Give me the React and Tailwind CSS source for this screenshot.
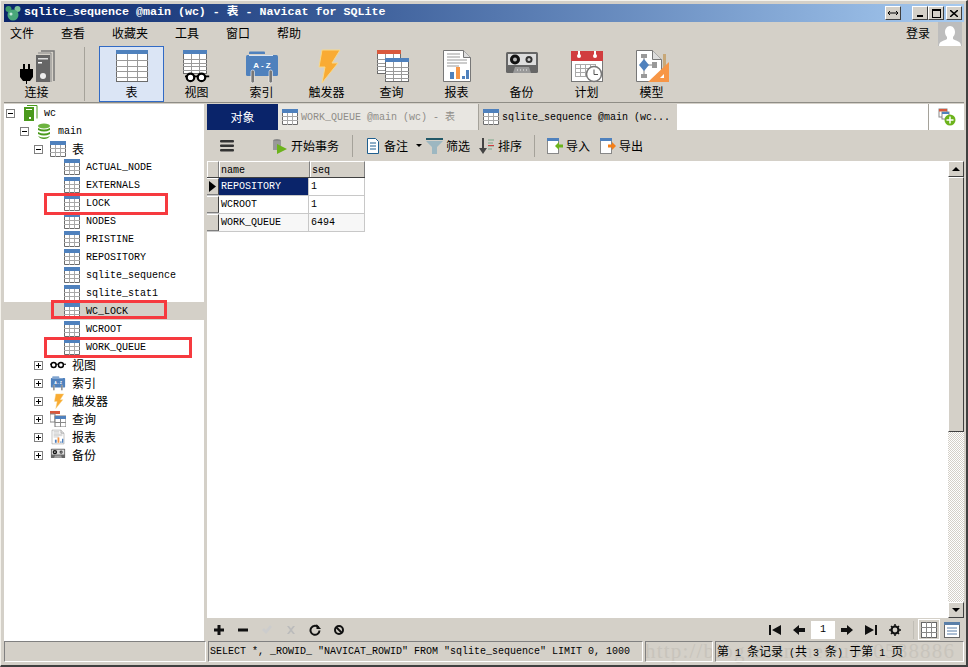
import React from "react";

const MONO = "font-['Liberation_Mono','Noto_Sans_CJK_SC',monospace]";
const CJK = "font-['Noto_Sans_CJK_SC','Liberation_Sans',sans-serif]";

const TableIcon = ({ s = 16, className = "" }) => (
  <svg width={s} height={s} viewBox="0 0 16 16" className={className}>
    <rect x="0" y="0" width="16" height="16" fill="#fff" />
    <rect x="0" y="0" width="16" height="4" fill="#4f81bd" />
    <path d="M.5 4v11.5h15V4" fill="none" stroke="#6b6b6b" />
    <path d="M0 7.5h16M0 11.5h16M5.5 4v12M10.5 4v12" stroke="#a8a8a8" />
  </svg>
);

const BigTable = ({ x = 0, y = 0, w = 32, h = 32, head = "#4f81bd" }) => {
  const rows = [];
  for (let i = 1; i < 5; i++) rows.push(y + 5 + (i * (h - 5)) / 5);
  return (
    <g>
      <rect x={x + 0.5} y={y + 0.5} width={w - 1} height={h - 1} fill="#fff" stroke="#6b6b6b" />
      <rect x={x} y={y} width={w} height={4} fill={head} />
      {rows.map((r) => (
        <path key={r} d={`M${x} ${Math.round(r) + 0.5}h${w}`} stroke="#9a9a9a" />
      ))}
      <path d={`M${x + Math.round(w * 0.34) + 0.5} ${y + 4}v${h - 5}M${x + Math.round(w * 0.66) + 0.5} ${y + 4}v${h - 5}`} stroke="#9a9a9a" />
    </g>
  );
};

const Connect = () => (
  <svg width="36" height="36" viewBox="0 0 36 36">
    <path d="M22 3h13v30" fill="none" stroke="#777" strokeWidth="1.5" />
    <path d="M19 5h13v29" fill="none" stroke="#888" strokeWidth="1" />
    <rect x="17" y="7" width="14" height="27" fill="#666" />
    <rect x="19" y="10" width="10" height="1.5" fill="#ddd" />
    <rect x="19" y="14" width="4" height="1.5" fill="#fff" />
    <circle cx="24" cy="28" r="3" fill="#eee" />
    <path d="M5 16v6M10 16v6" stroke="#000" strokeWidth="2" />
    <path d="M1 21h13v8l-3 4H8v4H7v-4H4l-3-4z" fill="#000" />
  </svg>
);

const Glasses = ({ s = 1 }) => (
  <g transform={`scale(${s})`}>
    <circle cx="5" cy="4" r="3.4" fill="#fff" stroke="#000" strokeWidth="2" />
    <circle cx="15" cy="4" r="3.4" fill="#fff" stroke="#000" strokeWidth="2" />
    <path d="M8 3h4M0 3h2M18 3h4" stroke="#000" strokeWidth="1.5" />
  </g>
);

const ViewIcon = () => (
  <svg width="36" height="36" viewBox="0 0 36 36">
    <BigTable x={4} y={2} w={24} h={24} />
    <g transform="translate(6 25)"><Glasses s={1.1} /></g>
  </svg>
);

const IndexIcon = ({ s = 36 }) => (
  <svg width={s} height={s} viewBox="0 0 36 36">
    <path d="M5 6V4.500q0-1 1-1h14q1 0 1 1V6z" fill="#4f81bd" />
    <rect x="2" y="7" width="32" height="21" rx="1.500" fill="#4f81bd" />
    <path d="M5 7.500h24" stroke="#fff" strokeWidth="0.800" />
    <text x="18" y="20" fontSize="8" fontWeight="700" fill="#fff" textAnchor="middle" fontFamily="Liberation Sans">A - Z</text>
    <rect x="7" y="22" width="3.500" height="13" rx="1.700" fill="#777" stroke="#fff" strokeWidth="0.600" />
    <rect x="25" y="22" width="3.500" height="13" rx="1.700" fill="#777" stroke="#fff" strokeWidth="0.600" />
  </svg>
);

const Bolt = ({ s = 36 }) => (
  <svg width={s} height={s} viewBox="0 0 36 36">
    <path d="M13 2h18l-8 13h6L13 35l3-16h-6z" fill="#f9ab33" stroke="#f7d98c" strokeWidth="1" />
  </svg>
);

const QueryIcon = () => (
  <svg width="36" height="36" viewBox="0 0 36 36">
    <BigTable x={3} y={2} w={24} h={24} head="#d9593d" />
    <BigTable x={11} y={10} w={24} h={24} />
  </svg>
);

const ReportIcon = ({ s = 36 }) => (
  <svg width={s} height={s} viewBox="0 0 36 36">
    <path d="M4.500 2.500h20l7 7v24h-27z" fill="#fff" stroke="#777" />
    <path d="M24.500 2.500v7h7" fill="#ddd" stroke="#777" />
    <path d="M8 6h13M8 9h13M8 12h20M8 15h20M8 18h12" stroke="#999" />
    <rect x="11" y="24" width="4" height="7" fill="#4f81bd" />
    <rect x="17" y="19" width="4" height="12" fill="#f79646" />
    <rect x="23" y="28" width="3" height="3" fill="#4f81bd" />
    <rect x="27" y="22" width="3" height="9" fill="#4f81bd" />
  </svg>
);

const BackupIcon = ({ s = 36 }) => (
  <svg width={s} height={s} viewBox="0 0 36 36">
    <rect x="2" y="4" width="32" height="21" rx="1.500" fill="#666" />
    <rect x="4" y="6" width="28" height="11" fill="#ddd" />
    <circle cx="11" cy="11.500" r="5" fill="#111" />
    <circle cx="11" cy="11.500" r="2" fill="#bbb" />
    <circle cx="25" cy="11.500" r="3.500" fill="#333" />
    <circle cx="25" cy="11.500" r="1.500" fill="#ccc" />
    <path d="M9 25l2-6h14l2 6z" fill="#999" />
    <path d="M13 22h10" stroke="#eee" strokeDasharray="1 2" />
  </svg>
);

const ScheduleIcon = () => (
  <svg width="36" height="36" viewBox="0 0 36 36">
    <rect x="2.500" y="3.500" width="31" height="30" fill="#fff" stroke="#777" />
    <rect x="2" y="3" width="32" height="10" fill="#d13d3f" />
    <path d="M10 3v5M26 3v5" stroke="#fff" strokeWidth="2" />
    <circle cx="10" cy="8" r="2" fill="#fff" />
    <circle cx="26" cy="8" r="2" fill="#fff" />
    <path d="M6 16.500h20M6 20.500h20M6 24.500h18M6 28.500h14M6.500 16v13M11.500 16v13M16.500 16v13M21.500 16v9M26.500 16v5" stroke="#aaa" />
    <circle cx="25" cy="26" r="7.500" fill="#fff" stroke="#777" strokeWidth="1.500" />
    <path d="M25 21.500V26.500h4" fill="none" stroke="#555" />
  </svg>
);

const ModelIcon = () => (
  <svg width="36" height="36" viewBox="0 0 36 36">
    <path d="M2.500 2.500h16l9 9v22h-25z" fill="#fff" stroke="#777" />
    <path d="M18.500 2.500v9h9" fill="#ddd" stroke="#777" />
    <rect x="7" y="6" width="6" height="4" fill="#999" />
    <rect x="7" y="26" width="6" height="4" fill="#999" />
    <rect x="18" y="14" width="5" height="6" fill="#999" />
    <path d="M10 10v16M10 17h8" stroke="#888" />
    <path d="M10 11l5 6-5 6-5-6z" fill="#4f81bd" />
    <rect x="29" y="6" width="3" height="20" fill="#c8a878" />
    <path d="M35 14v20H14z" fill="#f79646" />
    <path d="M30 26v4h-4z" fill="#fff" />
  </svg>
);

const Mickey = () => (
  <svg width="16" height="16" viewBox="0 0 16 16">
    <circle cx="3.500" cy="4" r="3" fill="#3d9a6a" />
    <circle cx="12.500" cy="4" r="3" fill="#7cc29a" />
    <circle cx="8" cy="10" r="5.500" fill="#4aa87a" />
    <circle cx="6" cy="9" r="1.500" fill="#c7eadb" />
  </svg>
);

const Expander = ({ open }) => (
  <span className="w-[9px] h-[9px] border border-[#808080] bg-white relative inline-block shrink-0">
    <span className="absolute left-[1px] top-[3px] w-[5px] h-[1px] bg-black" />
    {!open && <span className="absolute left-[3px] top-[1px] w-[1px] h-[5px] bg-black" />}
  </span>
);

const Win = ({ children, className = "" }) => (
  <div className={`flex items-center justify-center bg-[#d4d0c8] border border-t-white border-l-white border-r-[#404040] border-b-[#404040] ${className}`}>
    {children}
  </div>
);

const ToolBtn = ({ icon, label, active }) => (
  <div className={`w-[65px] h-[56px] flex flex-col items-center box-border ${active ? "border border-[#316ac5] bg-[#dbe5f5]" : ""}`}>
    <div className={`h-[36px] flex items-center justify-center ${active ? "mt-[1px]" : "mt-[2px]"}`}>{icon}</div>
    <span className={`text-[12px] leading-[16px] text-black ${CJK}`}>{label}</span>
  </div>
);

const TreeRow = ({ pad, expander, icon, label, cjk, selected }) => (
  <div className={`h-[18px] flex items-center ${selected ? "bg-[#d4d0c8]" : ""}`} style={{ paddingLeft: pad }}>
    {expander !== undefined && (
      <span className="mr-[7px] flex"><Expander open={expander} /></span>
    )}
    <span className="flex w-[16px] h-[16px] shrink-0">{icon}</span>
    <span className={`ml-[6px] whitespace-pre text-black ${cjk ? `text-[12px] ${CJK}` : `text-[10px] ${MONO}`}`}>{label}</span>
  </div>
);

const TABLES = ["ACTUAL_NODE", "EXTERNALS", "LOCK", "NODES", "PRISTINE", "REPOSITORY", "sqlite_sequence", "sqlite_stat1", "WC_LOCK", "WCROOT", "WORK_QUEUE"];

const RedBox = ({ className }) => (
  <div className={`absolute border-[3px] border-[#f63a3f] pointer-events-none ${className}`} />
);

const Small = ({ children, w = 16 }) => (
  <svg width={w} height="16" viewBox={`0 0 ${w} 16`} className="shrink-0">{children}</svg>
);

const Tb2 = ({ icon, label, className = "" }) => (
  <div className={`flex items-center gap-[3px] ${className}`}>
    {icon}
    <span className={`text-[12px] text-black ${CJK}`}>{label}</span>
  </div>
);

const Sep2 = () => <div className="w-[1px] h-[22px] bg-[#a5a29a]" />;

const rowsData = [
  ["REPOSITORY", "1"],
  ["WCROOT", "1"],
  ["WORK_QUEUE", "6494"],
];

const G = ({ children }) => (
  <svg width="12" height="12" viewBox="0 0 12 12">{children}</svg>
);

const M = ({ children }) => <span className={`text-[10px] ${MONO}`}>{children}</span>;

function Header({ children, className = "" }) {
  return (
    <div className={`shrink-0 bg-[#d4d0c8] border-r border-r-[#808080] border-t border-t-white border-l border-l-white pl-[1px] pt-[1px] flex items-center text-[10px] text-black font-['Liberation_Mono',monospace] ${className}`}>
      {children}
    </div>
  );
}

export default function App() {
  return (
    <div className="w-[968px] h-[667px] bg-[#d4d0c8] box-border pt-[4px] pl-[3px] pr-[2px] pb-[3px] border-b-[2px] border-r-[2px] border-b-[#404040] border-r-[#404040] border-t border-l border-t-[#f4f2ec] border-l-[#f4f2ec] relative overflow-hidden flex flex-col">
      {/* Watermark */}
      <div className="absolute left-[644px] top-[635px] text-[21px] leading-[30px] tracking-[1.2px] text-[#c8c4bc] whitespace-pre font-['Liberation_Serif',serif] pointer-events-none">http://blog.csdn.net/u010588886</div>

      {/* Title */}
      <div className="h-[18px] shrink-0 flex items-center bg-gradient-to-r from-[#0a246a] to-[#a6caf0] pl-[1px] pr-[2px] -mt-[1px]">
        <Mickey />
        <span className={`ml-[3px] text-[11.67px] font-bold text-white whitespace-pre ${MONO}`}>sqlite_sequence @main (wc) - 表 - Navicat for SQLite</span>
        <div className="flex-1" />
        <Win className="w-[16px] h-[14px] mr-[11px] text-[10px] leading-none">
          <svg width="10" height="6" viewBox="0 0 10 6"><path d="M0 3h10M2 1L0 3l2 2M8 1l2 2-2 2" fill="none" stroke="#000" /></svg>
        </Win>
        <Win className="w-[16px] h-[14px]"><span className="w-[6px] h-[2px] bg-black mt-[6px]" /></Win>
        <Win className="w-[16px] h-[14px]"><span className="w-[9px] h-[9px] border border-black border-t-2" /></Win>
        <Win className="w-[16px] h-[14px] ml-[2px]">
          <svg width="8" height="7" viewBox="0 0 8 7"><path d="M0 0l8 7M8 0L0 7" stroke="#000" strokeWidth="1.500" /></svg>
        </Win>
      </div>

      {/* Menu */}
      <div className={`h-[24px] shrink-0 flex items-center text-[12px] text-black pr-[2px] ${CJK}`}>
        <div className="flex pl-[6px] -mt-[2px]">
          <span className="w-[51px]">文件</span>
          <span className="w-[51px]">查看</span>
          <span className="w-[63px]">收藏夹</span>
          <span className="w-[51px]">工具</span>
          <span className="w-[51px]">窗口</span>
          <span>帮助</span>
        </div>
        <div className="flex-1" />
        <span className="mr-[8px] -mt-[2px]">登录</span>
        <div className="w-[24px] h-[24px] bg-[#bdbdbd] flex items-end justify-center overflow-hidden">
          <svg width="22" height="24" viewBox="0 0 22 24"><path d="M11 4c3 0 5 3 5 6 0 2-1 4-2 5v2c3 2 8 2 8 7H0c0-5 5-5 8-7v-2c-1-1-2-3-2-5 0-3 2-6 5-6z" fill="#fff" /></svg>
        </div>
      </div>

      {/* Toolbar */}
      <div className="h-[57px] shrink-0 flex items-start border-b border-b-[#8f8d86]">
        <ToolBtn icon={<Connect />} label="连接" />
        <div className="w-[1px] h-[54px] bg-[#a5a29a] ml-[15px] mr-[14px] mt-[1px]" />
        <ToolBtn active icon={<svg width="34" height="36" viewBox="0 0 34 36"><BigTable x={1} y={2} w={32} h={32} /></svg>} label="表" />
        <ToolBtn icon={<ViewIcon />} label="视图" />
        <ToolBtn icon={<IndexIcon />} label="索引" />
        <ToolBtn icon={<Bolt />} label="触发器" />
        <ToolBtn icon={<QueryIcon />} label="查询" />
        <ToolBtn icon={<ReportIcon />} label="报表" />
        <ToolBtn icon={<BackupIcon />} label="备份" />
        <ToolBtn icon={<ScheduleIcon />} label="计划" />
        <ToolBtn icon={<ModelIcon />} label="模型" />
      </div>

      {/* Main */}
      <div className="flex-1 min-h-0 flex gap-[3px] pt-[1px]">
        {/* Tree */}
        <div className="w-[200px] shrink-0 bg-white relative">
          <TreeRow pad={2} expander={true} icon={<svg width="16" height="16" viewBox="0 0 16 16"><path d="M5 0.500h10v13" fill="none" stroke="#4a9a1c" /><rect x="2" y="2" width="10" height="14" fill="#4a9a1c" /><rect x="4" y="4" width="6" height="1" fill="#fff" /><rect x="7" y="12" width="2" height="2" fill="#fff" /></svg>} label="wc" />
          <TreeRow pad={16} expander={true} icon={<svg width="16" height="16" viewBox="0 0 16 16"><ellipse cx="8" cy="3" rx="6" ry="2.500" fill="#6cb33f" /><path d="M2 5q6 3 12 0v2q-6 3-12 0zM2 9q6 3 12 0v2q-6 3-12 0zM2 13q6 3 12 0q-2 3-6 3t-6-3z" fill="#4a9a1c" /></svg>} label="main" />
          <TreeRow pad={30} expander={true} icon={<TableIcon />} label="表" cjk />
          {TABLES.map((t) => (
            <TreeRow key={t} pad={60} icon={<TableIcon />} label={t} selected={t === "WC_LOCK"} />
          ))}
          <TreeRow pad={30} expander={false} icon={<svg width="16" height="16" viewBox="0 0 22 16"><g transform="translate(0 4)"><Glasses /></g></svg>} label="视图" cjk />
          <TreeRow pad={30} expander={false} icon={<IndexIcon s={16} />} label="索引" cjk />
          <TreeRow pad={30} expander={false} icon={<Bolt s={16} />} label="触发器" cjk />
          <TreeRow pad={30} expander={false} icon={<svg width="16" height="16" viewBox="0 0 16 16"><rect width="10" height="3" fill="#d9593d" /><rect y="3" width="5" height="8" fill="#fff" stroke="#888" /><rect x="5" y="5" width="11" height="11" fill="#fff" stroke="#777" /><rect x="5" y="5" width="11" height="3" fill="#4f81bd" /><path d="M5 11.500h11M10.500 8v8" stroke="#888" /></svg>} label="查询" cjk />
          <TreeRow pad={30} expander={false} icon={<ReportIcon s={16} />} label="报表" cjk />
          <TreeRow pad={30} expander={false} icon={<BackupIcon s={16} />} label="备份" cjk />
          <RedBox className="left-[40px] top-[89px] w-[124px] h-[22px]" />
          <RedBox className="left-[47px] top-[196px] w-[116px] h-[19px]" />
          <RedBox className="left-[40px] top-[233px] w-[148px] h-[21px]" />
        </div>

        {/* Right */}
        <div className="flex-1 min-w-0 flex flex-col">
          {/* Tabs */}
          <div className="h-[26px] shrink-0 flex">
            <div className={`w-[71px] bg-[#0a246a] text-white text-[12px] flex items-center justify-center ${CJK}`}>对象</div>
            <div className="w-[200px] bg-[#e8e6e1] flex items-center pl-[4px]">
              <TableIcon />
              <span className={`ml-[3px] text-[10px] whitespace-pre text-[#8f8d88] ${MONO}`}>WORK_QUEUE @main (wc) - 表</span>
            </div>
            <div className="w-[199px] bg-[#d4d0c8] flex items-center pl-[4px] border-l border-l-[#a5a29a]">
              <TableIcon />
              <span className={`ml-[3px] text-[10px] whitespace-pre text-black ${MONO}`}>sqlite_sequence @main (wc...</span>
            </div>
            <div className="w-[251px] bg-white" />
            <div className="flex-1 bg-white border-l border-l-[#a5a29a] flex items-center justify-center">
              <svg width="18" height="18" viewBox="0 0 18 18">
                <rect x="1" y="1" width="8" height="8" fill="#fff" stroke="#888" />
                <rect x="1" y="1" width="8" height="2.500" fill="#d9593d" />
                <rect x="4" y="4" width="7" height="7" fill="#fff" stroke="#888" />
                <rect x="4" y="4" width="7" height="2" fill="#4f81bd" />
                <circle cx="12" cy="12" r="5.500" fill="#6cb31c" />
                <path d="M12 8.500v7M8.500 12h7" stroke="#fff" strokeWidth="1.500" />
              </svg>
            </div>
          </div>

          {/* Sub toolbar */}
          <div className="h-[31px] shrink-0 flex items-center relative">
            <svg width="14" height="12" viewBox="0 0 14 12" className="ml-[13px]">
              <rect width="14" height="2.500" rx="1" fill="#333" />
              <rect y="4.500" width="14" height="2.500" rx="1" fill="#333" />
              <rect y="9" width="14" height="2.500" rx="1" fill="#333" />
            </svg>
            <Tb2 className="ml-[38px]" label="开始事务" icon={
              <Small>
                <ellipse cx="5" cy="3" rx="4" ry="2" fill="#888" />
                <rect x="1" y="3" width="8" height="9" fill="#999" />
                <path d="M5 6l10 5-10 5z" fill="#6cb31c" />
              </Small>
            } />
            <div className="ml-[13px]"><Sep2 /></div>
            <Tb2 className="ml-[12px]" label="备注" icon={
              <Small>
                <path d="M2.500.5h8l3 3v12h-11z" fill="#fff" stroke="#1f5f8f" />
                <path d="M5 5h6M5 8h6M5 11h6" stroke="#1f5f8f" />
              </Small>
            } />
            <svg width="6" height="4" viewBox="0 0 6 4" className="ml-[8px]"><path d="M0 0h6L3 3z" fill="#000" /></svg>
            <Tb2 className="ml-[4px]" label="筛选" icon={
              <svg width="17" height="16" viewBox="0 0 17 16">
                <rect width="17" height="2" fill="#215868" />
                <path d="M0 3h17l-6 6v7H6V9z" fill="#9db7c1" />
              </svg>
            } />
            <Tb2 className="ml-[9px]" label="排序" icon={
              <svg width="16" height="16" viewBox="0 0 16 16">
                <path d="M3 0h2v10h3l-4 6-4-6h3z" fill="#444" />
                <path d="M9 2h6M9 5h5M9 8h6M9 11h4" stroke="#7aa88a" />
                <path d="M9 7.500h6" stroke="#d13d3f" />
              </svg>
            } />
            <div className="ml-[12px]"><Sep2 /></div>
            <Tb2 className="ml-[12px]" label="导入" icon={
              <Small>
                <rect x=".5" y=".5" width="11" height="15" fill="#fff" stroke="#888" />
                <rect x="0" y="0" width="12" height="3" fill="#4f81bd" />
                <path d="M8 8l4-4v2.500h4v3h-4V12z" fill="#6cb31c" />
              </Small>
            } />
            <Tb2 className="ml-[10px]" label="导出" icon={
              <Small>
                <rect x=".5" y=".5" width="11" height="15" fill="#fff" stroke="#888" />
                <rect x="0" y="0" width="12" height="3" fill="#4f81bd" />
                <path d="M16 8l-4-4v2.500H8v3h4V12z" fill="#f57f17" />
              </Small>
            } />
          </div>

          {/* Grid + scrollbar */}
          <div className="flex-1 min-h-0 flex bg-white">
            <div className="flex-1 min-w-0">
              <div className="w-[158px] flex flex-col">
                <div className="h-[17px] flex border-b border-b-[#404040]">
                  <Header className="w-[12px]" />
                  <Header className="w-[91px]">name</Header>
                  <Header className="flex-1 border-r-[#404040]">seq</Header>
                </div>
                {rowsData.map((r, i) => (
                  <div key={r[0]} className="h-[18px] flex border-b border-b-[#c8c8c8]">
                    <div className="w-[12px] shrink-0 bg-[#d4d0c8] border-r border-r-[#404040] border-t border-t-white border-b border-b-[#808080] flex items-center justify-center">
                      {i === 0 && <svg width="7" height="11" viewBox="0 0 7 11"><path d="M0 0l7 5.500L0 11z" fill="#000" /></svg>}
                    </div>
                    <div className={`w-[90px] shrink-0 pl-[2px] flex items-center text-[10px] ${MONO} ${i === 0 ? "bg-[#0a246a] text-white" : i === 2 ? "bg-[#f7f7f7] text-black" : "text-black"} border-r border-r-[#c8c8c8]`}>{r[0]}</div>
                    <div className={`flex-1 pl-[2px] flex items-center text-[10px] text-black border-r border-r-[#c8c8c8] ${MONO} ${i === 2 ? "bg-[#f7f7f7]" : ""}`}>{r[1]}</div>
                  </div>
                ))}
              </div>
            </div>
            {/* Scrollbar */}
            <div className="w-[16px] shrink-0 flex flex-col bg-[repeating-conic-gradient(#d4d0c8_0%_25%,#ffffff_0%_50%)] bg-[length:2px_2px]">
              <Win className="h-[16px] shrink-0"><span className="w-0 h-0 border-x-[4px] border-x-transparent border-b-[4px] border-b-black" /></Win>
              <div className="h-[255px] shrink-0 bg-[#d4d0c8] border border-t-white border-l-white border-r-[#404040] border-b-[#404040]" />
              <div className="flex-1" />
              <Win className="h-[16px] shrink-0"><span className="w-0 h-0 border-x-[4px] border-x-transparent border-t-[4px] border-t-black" /></Win>
            </div>
          </div>

          {/* Bottom bar */}
          <div className="h-[23px] shrink-0 flex items-center pr-[2px]">
            <div className="flex items-center gap-[12px] ml-[6px]">
              <G><path d="M4.500 1h3v3.500H11v3H7.500V11h-3V7.500H1v-3h3.500z" fill="#111" /></G>
              <G><rect x="1" y="4.500" width="10" height="3" fill="#111" /></G>
              <G><path d="M1 6l2-2 2 2 4-5 2 2-6 7z" fill="#ccc" /></G>
              <G><path d="M2 2h2l2 2.500L8 2h2L7 6l3 4H8L6 7.500 4 10H2l3-4z" fill="#bbb" /></G>
              <G><path d="M9.500 3.500A4.500 4.500 0 1 0 10.500 6.500" fill="none" stroke="#111" strokeWidth="2" /><path d="M7.500 0v5h4.500z" fill="#111" /></G>
              <G><circle cx="6" cy="6" r="4" fill="none" stroke="#111" strokeWidth="2" /><path d="M3 3l6 6" stroke="#111" strokeWidth="2" /></G>
            </div>
            <div className="flex-1" />
            <svg width="12" height="10" viewBox="0 0 12 10"><path d="M0 0h2v10H0zM12 0v10L3 5z" fill="#111" /></svg>
            <svg width="12" height="10" viewBox="0 0 12 10" className="ml-[12px]"><path d="M0 5l6-5v3h6v4H6v3z" fill="#111" /></svg>
            <div className={`ml-[6px] w-[24px] h-[18px] bg-white flex items-center justify-center text-[10px] text-black ${MONO}`}>1</div>
            <svg width="12" height="10" viewBox="0 0 12 10" className="ml-[6px]"><path d="M12 5L6 0v3H0v4h6v3z" fill="#111" /></svg>
            <svg width="12" height="10" viewBox="0 0 12 10" className="ml-[12px]"><path d="M12 0h-2v10h2zM0 0v10l9-5z" fill="#111" /></svg>
            <svg width="12" height="12" viewBox="0 0 12 12" className="ml-[12px]"><circle cx="6" cy="6" r="3.500" fill="none" stroke="#111" strokeWidth="2.200" /><path d="M6 0v2M6 10v2M0 6h2M10 6h2M2 2l1.500 1.500M8.500 8.500L10 10M2 10l1.500-1.500M8.500 3.500L10 2" stroke="#111" strokeWidth="1.500" /></svg>
            <div className="w-[1px] h-[18px] bg-[#c0bdb5] ml-[12px]" />
            <div className="ml-[4px] w-[22px] h-[21px] border border-white flex items-center justify-center">
              <svg width="16" height="16" viewBox="0 0 16 16"><rect x=".5" y=".5" width="15" height="15" fill="#fff" stroke="#666" /><path d="M0 5.500h16M0 10.500h16M5.500 0v16M10.500 0v16" stroke="#888" /></svg>
            </div>
            <div className="ml-[2px] w-[20px] flex items-center justify-center">
              <svg width="16" height="16" viewBox="0 0 16 16"><rect x=".5" y=".5" width="15" height="15" fill="#fff" stroke="#666" /><rect x="0" y="0" width="16" height="3" fill="#5a7fa8" /><path d="M3 6h10M3 9h10M3 12h10" stroke="#5a7fa8" /></svg>
            </div>
          </div>
        </div>
      </div>

      {/* Status */}
      <div className="h-[21px] shrink-0 flex gap-[2px] relative">
        <div className="w-[202px] border border-t-[#808080] border-l-[#808080] border-r-white border-b-white" />
        <div className="w-[435px] border border-t-[#808080] border-l-[#808080] border-r-white border-b-white flex items-center pl-[1px] overflow-hidden">
          <span className={`text-[10px] whitespace-pre text-black ${MONO}`}>SELECT *, _ROWID_ "NAVICAT_ROWID" FROM "sqlite_sequence" LIMIT 0, 1000</span>
        </div>
        <div className="w-[68px] border border-t-[#808080] border-l-[#808080] border-r-white border-b-white" />
        <div className="flex-1 border border-t-[#808080] border-l-[#808080] border-r-white border-b-white flex items-center pl-[1px]">
          <span className={`text-[12px] whitespace-pre text-black ${CJK}`}>第<M> 1 </M>条记录<M> (</M>共<M> 3 </M>条<M>) </M>于第<M> 1 </M>页</span>
        </div>
      </div>
    </div>
  );
}
